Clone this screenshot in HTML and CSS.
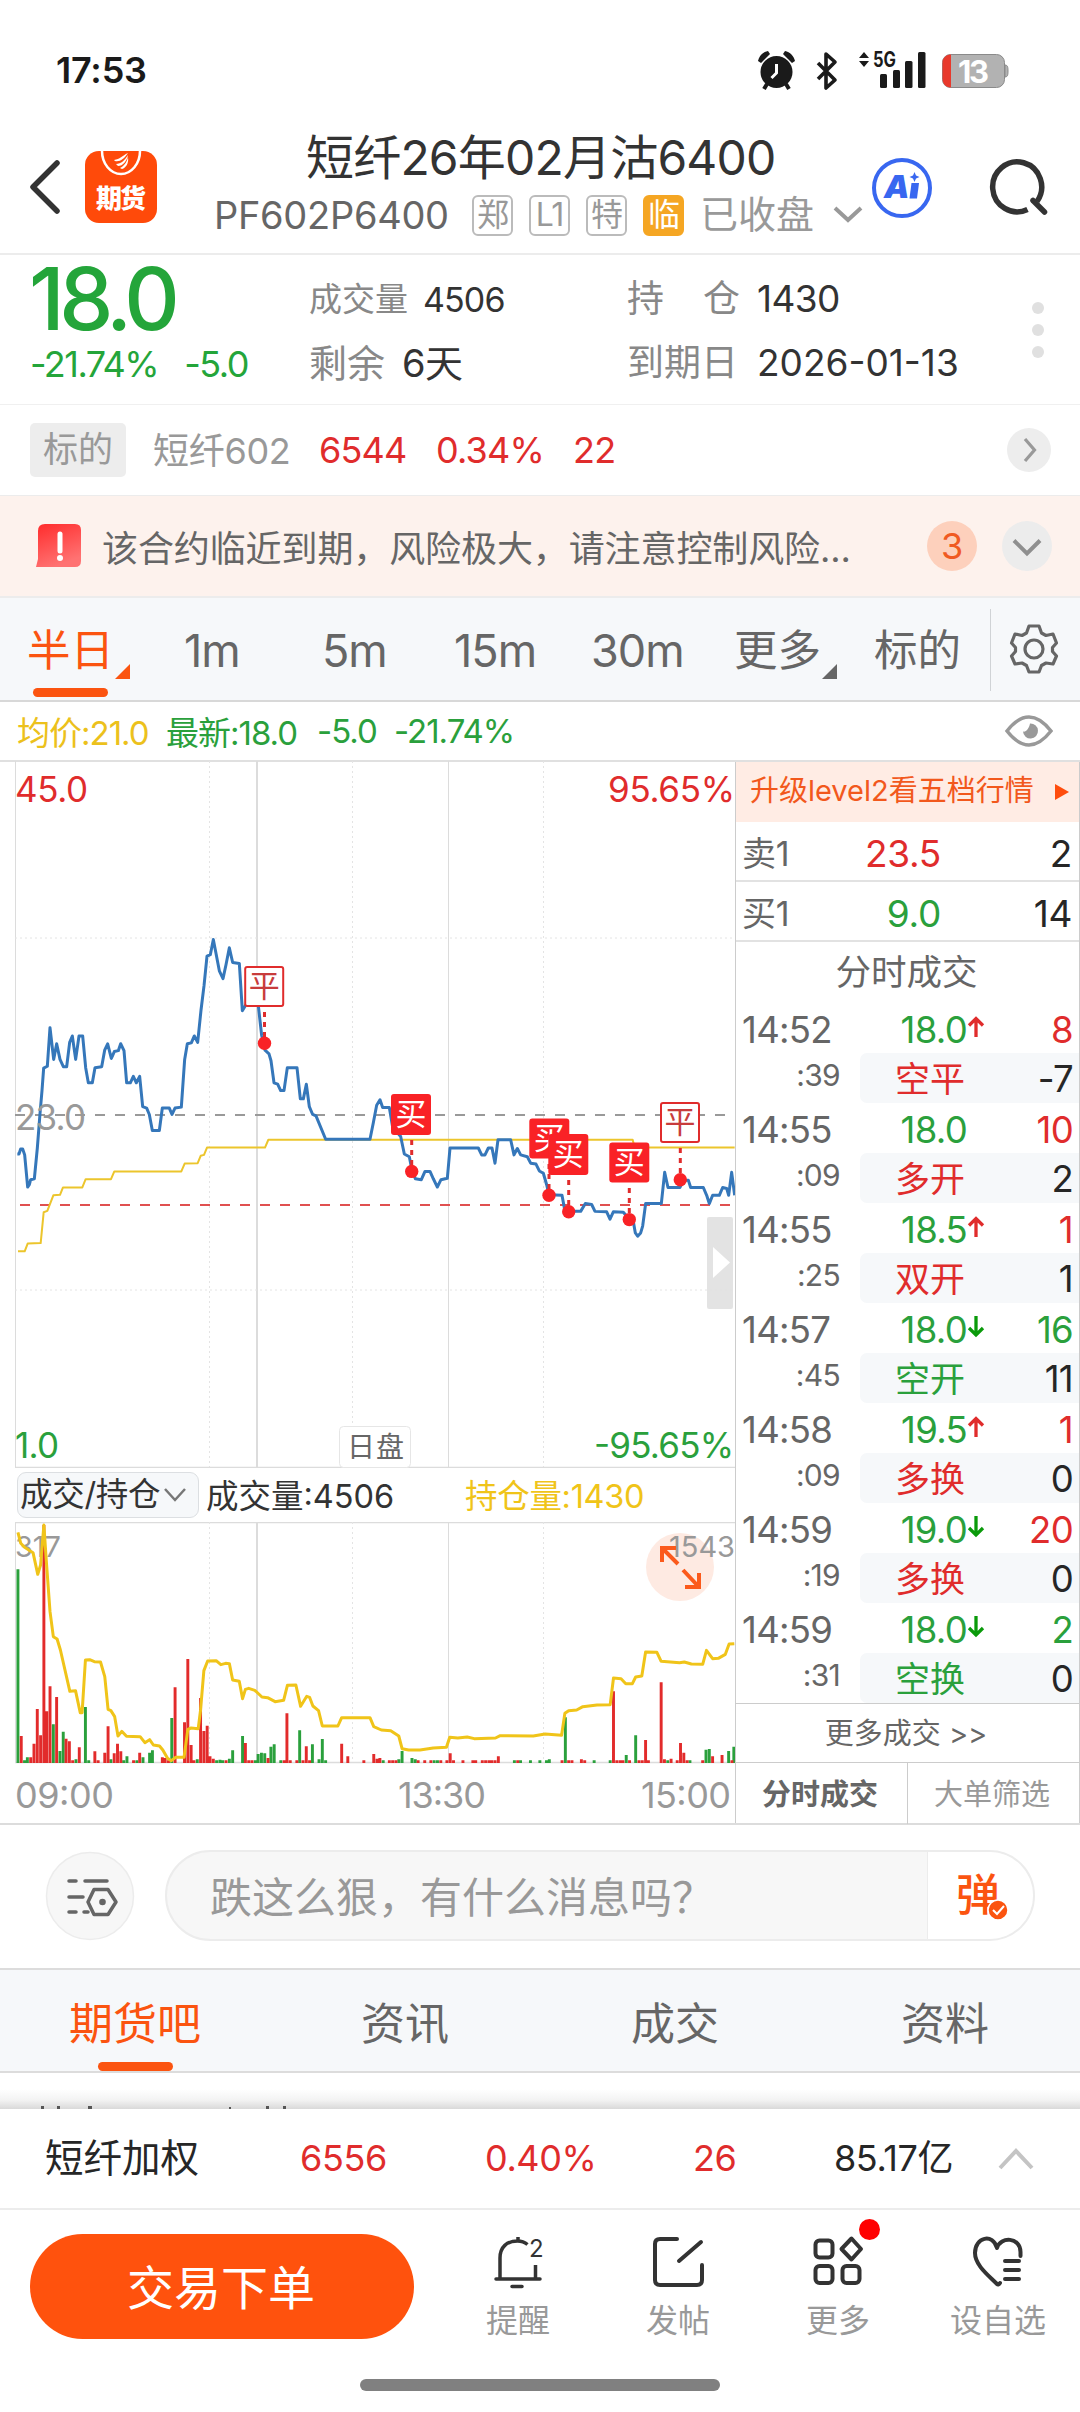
FILE: index.html
```html
<!DOCTYPE html>
<html lang="zh-CN">
<head>
<meta charset="utf-8">
<title>短纤26年02月沽6400</title>
<link rel="stylesheet" href="styles.css">
</head>
<body>
<div class="screen">
  <header class="status">
    <span class="clock">17:53</span>
    <svg class="status-icons" width="252" height="44" viewBox="0 0 252 44">
      <g fill="#1a1a1a">
        <circle cx="18.5" cy="22" r="16"/>
        <path d="M0 11C1 6 5 2 10 1l2 3L3 13zM37 11C36 6 32 2 27 1l-2 3 9 9z"/>
      </g>
      <path d="M9 34l-3 5M28 34l3 5" stroke="#1a1a1a" stroke-width="4"/>
      <path d="M18.500 14v9l-5 5" fill="none" stroke="#fff" stroke-width="3"/>
      <path d="M60 13l17 17-9 8V4l9 8-17 17" fill="none" stroke="#1a1a1a" stroke-width="3.600" stroke-linejoin="round"/>
      <path d="M106 2l5 6h-10zM106 17l5-6h-10z" fill="#1a1a1a"/>
      <text x="115" y="17" class="net" textLength="23" lengthAdjust="spacingAndGlyphs">5G</text>
      <g fill="#1a1a1a"><rect x="122" y="24" width="7" height="14" rx="1.500"/><rect x="135" y="20" width="7" height="18" rx="1.500"/><rect x="147" y="11" width="7.500" height="27" rx="1.500"/><rect x="160" y="2" width="7.500" height="36" rx="1.500"/></g>
      <rect x="184.500" y="4.500" width="62" height="33" rx="8" fill="#b2b2b2" stroke="#8a8a8a"/>
      <path d="M247 15c3 0 3 3 3 6s0 6-3 6z" fill="#b2b2b2" stroke="#8a8a8a"/>
      <path d="M193 4.500h-1a8 8 0 0 0-7.500 8v17a8 8 0 0 0 7.500 8h1z" fill="#e8392c"/>
      <text x="200" y="32.500" class="battery" textLength="31">13</text>
    </svg>
  </header>

  <div class="titlebar">
    <svg class="back" width="32" height="54" viewBox="0 0 32 54"><path d="M28 3L4 27l24 24" fill="none" stroke="#333" stroke-width="5.500" stroke-linecap="round" stroke-linejoin="round"/></svg>
    <svg class="app" width="72" height="72" viewBox="0 0 72 72">
      <rect width="72" height="72" rx="14" fill="#ff4a0a"/>
      <path d="M17 0a19 23 0 0 0 38 0" fill="none" stroke="#fff" stroke-width="2.500"/>
      <path d="M29 9c6-1 8-4 14-7-4 6-8 9-13 8zM31 13c5 0 9-4 12-9-1 6-5 11-10 11zM35 17c4-2 7-6 8-11 1 6-2 11-6 12z" fill="#fff"/>
      <text x="11" y="57" class="app-name" textLength="50">期货</text>
    </svg>
    <div class="heading">
      <h1>短纤26年02月沽6400</h1>
      <div class="subhead">
        <span class="code">PF602P6400</span>
        <i class="tag">郑</i><i class="tag">L1</i><i class="tag">特</i><i class="tag hot">临</i>
        <span class="closed">已收盘</span>
        <svg width="32" height="20" viewBox="0 0 32 20"><path d="M3 3l13 12L29 3" fill="none" stroke="#999" stroke-width="4"/></svg>
      </div>
    </div>
    <svg class="ai" width="62" height="62" viewBox="0 0 62 62">
      <circle cx="31" cy="31" r="28" fill="none" stroke="#3867f0" stroke-width="4"/>
      <text x="13" y="41" class="ai-text">A</text>
      <path d="M40.500 26h7.500l-2 15.500h-7.500z" fill="#3867f0"/>
      <path d="M43.500 15l1.500 3.500 3.500 1.500-3.500 1.500-1.500 3.500-1.500-3.500-3.500-1.500 3.500-1.500z" fill="#3867f0"/>
    </svg>
    <svg class="search" width="64" height="62" viewBox="0 0 64 62"><path d="M41.500 52.500A24.500 25 0 1 1 51 44.500" fill="none" stroke="#333" stroke-width="5.500"/><path d="M47 43.500l11.500 11.500" stroke="#333" stroke-width="5.500" stroke-linecap="round"/></svg>
  </div>

  <section class="quote">
    <div class="last"><b>18.0</b><p><span>-21.74%</span><span>-5.0</span></p></div>
    <div class="stat vol"><p><em>成交量</em>4506</p><p class="big"><em>剩余</em>6天</p></div>
    <div class="stat pos"><p><em class="wide"><span>持</span><span>仓</span></em>1430</p><p class="date"><em>到期日</em>2026-01-13</p></div>
    <div class="dots"><i></i><i></i><i></i></div>
  </section>

  <section class="underlying">
    <span class="chip">标的</span><span class="uname">短纤602</span><span>6544</span><span>0.34%</span><span>22</span>
    <svg width="46" height="46" viewBox="0 0 46 46"><circle cx="23" cy="23" r="22" fill="#ededed"/><path d="M19 12l9.500 11L19 34" fill="none" stroke="#999" stroke-width="3.200"/></svg>
  </section>

  <section class="alert">
    <svg width="46" height="44" viewBox="0 0 46 44"><defs><linearGradient id="warn" x1="0" y1="0" x2=".4" y2="1"><stop stop-color="#ff2b2b"/><stop offset="1" stop-color="#ff7272"/></linearGradient></defs><path d="M9 0h30q6 0 6 6v31q0 6-6 6H0l2-8V7q0-7 7-7z" fill="url(#warn)"/><path d="M24 10v17" stroke="#fff" stroke-width="5" stroke-linecap="round"/><circle cx="24" cy="34" r="3" fill="#fff"/></svg>
    <p>该合约临近到期，风险极大，请注意控制风险...</p>
    <b>3</b>
    <svg width="50" height="50" viewBox="0 0 50 50"><circle cx="25" cy="25" r="25" fill="#ececec"/><path d="M12 19.500l13 13 13-13" fill="none" stroke="#8f8f8f" stroke-width="4"/></svg>
  </section>

  <nav class="periods">
    <span class="on more">半日</span><span>1m</span><span>5m</span><span>15m</span><span>30m</span><span class="more">更多</span><span>标的</span>
    <svg width="90" height="82" viewBox="0 0 90 82"><path d="M.5 0v82" stroke="#d0d3d6"/><g fill="none" stroke="#666" stroke-width="3.200" stroke-linejoin="round"><circle cx="44" cy="40" r="9"/><path d="M39 17h10l2.500 7 4.500 2.500 7-1.500 3.500 9-4 4.500v4l4 4.500-3.500 8-7-1-4.500 2.500-2.500 6.500H39l-2.500-6.500-4.500-2.500-7 1-3.500-8 4-4.500v-4l-4-4.500 3.500-9 7 1.500 4.500-2.500z"/></g></svg>
  </nav>

  <div class="legend">
    <span class="avg">均价:21.0</span><span>最新:18.0</span><span>-5.0</span><span>-21.74%</span>
    <svg width="50" height="34" viewBox="0 0 50 34"><path d="M3 17Q25-11 47 17 25 45 3 17z" fill="none" stroke="#999" stroke-width="3.500"/><path d="M26 9.500a7.500 7.500 0 1 1-7 8c3 1 6-3 7-8z" fill="#999"/></svg>
  </div>

  <main class="board">
    <div class="charts">
      <svg class="price" width="735" height="708" viewBox="0 0 735 708">
        <g stroke="#dcdcdc" fill="none">
          <path d="M15.500 1v706M448.500 1v706"/><path d="M257 1v706" stroke-width="2"/>
          <path d="M15 178h720M15 530h720M209.500 1v706M352.500 1v706M543.500 1v706" stroke="#e4e4e4" stroke-dasharray="2 3"/>
        </g>
        <path d="M15 707.500h720" stroke="#dcdcdc" stroke-width="1.500"/>
        <path d="M15 355h720" stroke="#999" stroke-width="2" stroke-dasharray="10 10"/>
        <path d="M20 445h715" stroke="#e05050" stroke-width="2" stroke-dasharray="10 10"/>
        <rect x="339.500" y="666.500" width="71" height="41" rx="4" fill="#fff" stroke="#e6e6e6"/>
        <text x="347" y="697" class="session" textLength="57">日盘</text>
        <g fill="none" transform="scale(.33333 .45918)" stroke-linejoin="round">
          <polyline vector-effect="non-scaling-stroke" stroke="#ecc52c" stroke-width="2" points="54,1070 74,1070 83,1053 122,1052 131,985 142,982 160,948 180,947 189,931 247,931 257,913 333,913 343,896 544,896 554,879 593,878 602,862 612,860 621,844 795,844 805,827 1898,827 1904,844 2204,844"/>
          <polyline vector-effect="non-scaling-stroke" stroke="#3577ba" stroke-width="3" points="52,858 57,858 62,847 68,847 74,860 83,930 88,925 92,914 103,912 112,845 120,770 126,720 131,671 142,667 150,583 161,652 170,618 180,652 190,668 200,668 209,615 217,601 227,652 237,601 248,601 257,670 265,703 277,703 285,670 305,668 314,632 323,618 334,650 343,635 355,633 362,618 372,633 380,703 391,703 400,689 409,703 419,689 428,755 440,758 448,772 457,807 478,807 487,758 508,758 516,772 525,758 544,756 554,652 562,618 574,616 583,601 593,615 603,545 612,492 621,427 631,424 640,391 658,459 669,476 678,446 688,409 698,441 718,443 727,546 736,535 750,520 775,535 785,600 795,632 807,640 813,655 822,703 833,706 842,720 852,720 862,670 891,670 901,738 910,738 919,706 928,755 938,772 948,775 977,826 1110,826 1120,790 1130,752 1140,740 1148,757 1168,757 1178,800 1202,820 1213,858 1228,864 1235,890 1246,912 1264,914 1275,896 1290,896 1300,912 1312,930 1323,914 1342,911 1350,845 1435,845 1445,860 1455,860 1465,845 1476,845 1485,878 1494,827 1532,827 1542,860 1552,846 1562,860 1582,864 1592,878 1608,880 1618,895 1630,900 1640,925 1647,947 1686,948 1695,983 1742,983 1756,966 1775,968 1785,983 1820,984 1830,1000 1840,984 1870,985 1888,1000 1900,1005 1906,1030 1913,1037 1922,1030 1928,1015 1937,966 1984,966 1994,898 2004,931 2040,931 2050,915 2065,915 2072,931 2110,931 2120,948 2128,966 2138,948 2158,948 2168,931 2180,933 2186,948 2195,898 2204,948"/>
        </g>
        <g class="num">
          <text x="15" y="41.500" fill="#e02c2c" textLength="73">45.0</text>
          <text x="608" y="41.500" fill="#e02c2c" textLength="127">95.65%</text>
          <text x="15" y="370" fill="#999" textLength="71">23.0</text>
          <text x="15" y="698" fill="#2aa03c" textLength="44">1.0</text>
          <text x="594" y="698" fill="#2aa03c" textLength="140">-95.65%</text>
        </g>
        <g stroke="#e02c2c" stroke-width="3" stroke-dasharray="5 5"><path d="M264.500 252v28M411.700 380v28M549 404v28M568.700 420v28M629.300 428v28M680.300 388v28"/></g>
        <g fill="#f92226"><circle cx="264.500" cy="283.300" r="6.700"/><circle cx="411.700" cy="411.400" r="6.700"/><circle cx="549" cy="435.300" r="6.700"/><circle cx="568.700" cy="451.800" r="6.700"/><circle cx="629.300" cy="459.600" r="6.700"/><circle cx="680.300" cy="419.700" r="6.700"/></g>
        <g class="mark">
          <rect x="245.200" y="207" width="38" height="39" rx="2" class="close"/><text x="264.300" y="237" class="closed-t">平</text>
          <rect x="391" y="334" width="40" height="41" rx="3"/><text x="411" y="365">买</text>
          <rect x="529.300" y="358.500" width="40" height="40" rx="3"/><text x="549.300" y="389">买</text>
          <rect x="548.300" y="374" width="40" height="41" rx="3"/><text x="568.300" y="405">买</text>
          <rect x="609.300" y="382.500" width="40" height="40" rx="3"/><text x="629.300" y="413">买</text>
          <rect x="661" y="343" width="38" height="39" rx="2" class="close"/><text x="680" y="373" class="closed-t">平</text>
        </g>
        <rect x="707" y="457" width="26" height="92" rx="2" fill="#e0e0e0" fill-opacity=".9"/><path d="M713 487l17 15.500L713 518z" fill="#fff"/>
      </svg>

      <div class="indicator">
        <span class="select">成交/持仓<svg width="22" height="14" viewBox="0 0 22 14"><path d="M1 1l10 11L21 1" fill="none" stroke="#777" stroke-width="2.500"/></svg></span>
        <span class="iv">成交量:4506</span><span class="io">持仓量:1430</span>
      </div>

      <svg class="volume" width="735" height="302" viewBox="0 0 735 302">
        <g stroke="#dcdcdc" fill="none"><path d="M15 .500h720M15 240.500h720" stroke-width="1.500"/><path d="M15.500 0v240M448.500 0v240"/><path d="M257 0v240" stroke-width="2"/><path d="M209.500 0v240M352.500 0v240M543.500 0v240" stroke="#e4e4e4" stroke-dasharray="2 3"/></g>
        <circle cx="680" cy="45" r="34" fill="#feeae2"/>
        <g class="axis">
          <text x="15" y="35" class="small" textLength="46">317</text><text x="669" y="35" class="small" textLength="66">1543</text>
          <text x="15" y="286" textLength="99">09:00</text><text x="398" y="286" textLength="88">13:30</text><text x="641" y="286" textLength="90">15:00</text>
        </g>
        <path d="M678 42L663 27M662 40V26h14M683 48l15 16M699 51v14h-14" fill="none" stroke="#fb5a1c" stroke-width="4"/>
        <g fill="none" transform="translate(0 -62) scale(.47192 .33333)">
          <path stroke="#2aa03c" stroke-width="6.200" d="M38 909V328M52 909V901M58 909V892M113 909V793M127 909V873M134 909V815M161 909V898M181 909V741M188 909V901M235 909V898M262 909V901M269 909V889M290 909V901M303 909V892M317 909V878M323 909V871M364 909V774M418 909V898M459 909V901M466 909V899M472 909V901M486 909V896M493 909V871M514 909V828M541 909V901M547 909V882M554 909V878M561 909V880M574 909V860M581 909V853M595 909V901M635 909V811M662 909V853M676 909V898M683 909V837M690 909V901M812 909V901M845 909V898M852 909V873M873 909V894M880 909V898M920 909V901M927 909V901M1090 909V901M1103 909V901M1124 909V901M1144 909V901M1158 909V901M1164 909V898M1198 909V772M1259 909V901M1293 909V901M1327 909V885M1347 909V826M1415 909V901M1462 909V901M1496 909V869M1503 909V867M1544 909V873M1555 909V860"/>
          <path stroke="#e22b2b" stroke-width="6.200" d="M45 909V828M65 909V892M72 909V851M79 909V747M86 909V826M93 909V195M99 909V754M106 909V679M120 909V711M140 909V836M147 909V844M154 909V901M168 909V862M201 909V874M208 909V901M222 909V878M229 909V799M242 909V880M249 909V851M256 909V874M283 909V901M296 909V878M344 909V892M350 909V894M357 909V901M371 909V682M391 909V787M398 909V597M405 909V855M411 909V901M425 909V714M432 909V813M439 909V797M445 909V889M452 909V896M479 909V901M520 909V849M527 909V901M534 909V901M568 909V894M602 909V901M608 909V760M615 909V901M629 909V901M642 909V901M649 909V859M656 909V901M724 909V851M737 909V889M771 909V901M792 909V882M799 909V896M805 909V894M825 909V901M832 909V901M839 909V901M886 909V901M900 909V901M913 909V901M934 909V901M947 909V901M954 909V880M961 909V901M981 909V901M1002 909V901M1008 909V901M1022 909V901M1029 909V901M1036 909V901M1042 909V901M1049 909V901M1056 909V889M1097 909V901M1191 909V901M1205 909V901M1212 909V901M1232 909V898M1239 909V901M1300 909V694M1307 909V901M1314 909V901M1320 909V901M1334 909V901M1354 909V901M1361 909V901M1368 909V840M1374 909V901M1401 909V667M1408 909V898M1422 909V896M1435 909V901M1442 909V849M1449 909V878M1456 909V901M1489 909V901M1510 909V889M1530 909V885M1551 909V901"/>
          <polyline vector-effect="non-scaling-stroke" stroke="#f0c419" stroke-width="3" stroke-linejoin="round" points="38,217 44,250 52,262 70,278 80,343 86,315 93,195 98,300 106,455 113,530 121,537 128,570 148,694 160,692 170,758 174,758 181,600 190,599 200,605 213,606 222,650 229,748 235,752 243,770 250,828 258,814 268,829 297,830 307,848 317,839 325,855 338,858 345,870 355,895 363,902 372,892 390,892 398,808 405,804 420,806 425,750 432,632 440,603 458,602 468,614 478,610 486,611 493,660 507,664 514,716 520,688 527,685 540,691 555,711 567,713 583,725 601,721 609,676 627,675 637,739 650,709 656,712 663,738 675,752 683,798 716,798 724,773 784,773 792,800 808,810 828,812 845,828 852,866 866,870 890,870 918,864 946,862 953,832 970,834 990,831 1005,836 1050,834 1060,827 1130,828 1155,822 1190,826 1197,760 1205,752 1222,750 1235,740 1265,735 1293,734 1300,654 1316,656 1326,671 1340,671 1347,651 1360,648 1368,576 1392,577 1401,604 1440,608 1450,606 1465,612 1489,613 1497,571 1510,596 1522,595 1537,583 1545,552 1556,551"/>
        </g>
      </svg>
    </div>

    <aside class="tape">
      <div class="upgrade"><span>升级level2看五档行情</span><svg width="14" height="16" viewBox="0 0 14 16"><path d="M0 0l14 8-14 8z" fill="#ff4d0d"/></svg></div>
      <div class="level"><span>卖1</span><b class="r">23.5</b><i>2</i></div>
      <div class="level"><span>买1</span><b class="g">9.0</b><i>14</i></div>
      <h2>分时成交</h2>
      <div class="trade"><span class="t">14:52</span><b class="g">18.0</b><svg class="r"><use href="#up"/></svg><i class="r">8</i><span class="s">:39</span><div><b class="r">空平</b><i>-7</i></div></div>
      <div class="trade"><span class="t">14:55</span><b class="g">18.0</b><svg></svg><i class="r">10</i><span class="s">:09</span><div><b class="r">多开</b><i>2</i></div></div>
      <div class="trade"><span class="t">14:55</span><b class="g">18.5</b><svg class="r"><use href="#up"/></svg><i class="r">1</i><span class="s">:25</span><div><b class="r">双开</b><i>1</i></div></div>
      <div class="trade"><span class="t">14:57</span><b class="g">18.0</b><svg class="dn"><use href="#down"/></svg><i class="g">16</i><span class="s">:45</span><div><b class="g">空开</b><i>11</i></div></div>
      <div class="trade"><span class="t">14:58</span><b class="g">19.5</b><svg class="r"><use href="#up"/></svg><i class="r">1</i><span class="s">:09</span><div><b class="r">多换</b><i>0</i></div></div>
      <div class="trade"><span class="t">14:59</span><b class="g">19.0</b><svg class="dn"><use href="#down"/></svg><i class="r">20</i><span class="s">:19</span><div><b class="r">多换</b><i>0</i></div></div>
      <div class="trade"><span class="t">14:59</span><b class="g">18.0</b><svg class="dn"><use href="#down"/></svg><i class="g">2</i><span class="s">:31</span><div><b class="g">空换</b><i>0</i></div></div>
      <div class="all">更多成交 &gt;&gt;</div>
      <div class="switch"><b>分时成交</b><span>大单筛选</span></div>
    </aside>
  </main>

  <section class="comment">
    <svg width="90" height="90" viewBox="0 0 90 90"><circle cx="45" cy="45" r="43.500" fill="#f7f7f7" stroke="#ececec" stroke-width="1.500"/><g fill="none" stroke="#666" stroke-width="3.500" stroke-linecap="round"><path d="M24 30h7M40 30h22M24 46h14M24 61h7M39 61h4"/><path d="M49 38.500h14l8 12.500-8 12.500H49L43 51z" stroke-linejoin="round"/></g><circle cx="57.500" cy="51" r="3.300" fill="#666"/></svg>
    <div class="field"><span>跌这么狠，有什么消息吗？</span><div class="danmu"><b>弹</b><svg width="22" height="22" viewBox="0 0 22 22"><circle cx="11" cy="11" r="10" fill="#fb5410" stroke="#fff" stroke-width="1.500"/><path d="M6 11l4 4 7-8" fill="none" stroke="#fff" stroke-width="2"/></svg></div></div>
  </section>

  <nav class="tabs"><span class="on">期货吧</span><span>资讯</span><span>成交</span><span>资料</span></nav>
  <div class="peek"><svg width="300" height="3" viewBox="0 0 300 3"><path d="M41 0h3v3h-3zM57 0h3v3h-3zM88 0h4v3h-4zM229 1h2v2h-2zM266 0h3v3h-3zM283 0h3v3h-3z" fill="#555"/></svg></div>

  <footer>
    <div class="index"><span>短纤加权</span><span class="r">6556</span><span class="r">0.40%</span><span class="r">26</span><span>85.17亿</span><svg width="36" height="24" viewBox="0 0 36 24"><path d="M2 21L18 4l16 17" fill="none" stroke="#c4c4c4" stroke-width="4"/></svg></div>
    <div class="actions">
      <button>交易下单</button>
      <div class="act"><svg width="56" height="56" viewBox="0 0 56 56"><g fill="none" stroke="#333" stroke-width="3.500" stroke-linecap="round"><path d="M6 45h44M22 52.500h10"/><path d="M10 44V24c0-11 7-17 17.500-17 4 0 7 1 10 3.500M45.500 44V31M28 7V3" stroke-linecap="butt"/></g><text x="39" y="23" class="count">2</text></svg><span>提醒</span></div>
      <div class="act"><svg width="56" height="56" viewBox="0 0 56 56"><path d="M27 5H10Q5 5 5 10v36q0 5 5 5h37q5 0 5-5V31M51 8L29 27" fill="none" stroke="#333" stroke-width="4" stroke-linecap="round"/></svg><span>发帖</span></div>
      <div class="act"><svg width="56" height="56" viewBox="0 0 56 56"><g fill="none" stroke="#333" stroke-width="4"><rect x="5.500" y="6.500" width="17" height="17" rx="4"/><rect x="5.500" y="32" width="17" height="17" rx="4"/><rect x="32.500" y="32" width="17" height="17" rx="4"/><path d="M41.500 4.500L51 15l-9.500 10.500L31.500 15z" stroke-linejoin="round"/></g></svg><i class="dot"></i><span>更多</span></div>
      <div class="act"><svg width="56" height="56" viewBox="0 0 56 56"><path d="M50.500 22V18c0-15-20-16-23.500-4C23-1 5 3 5 19c0 12 13 22 22 31 1 1 2 .5 3-1" fill="none" stroke="#333" stroke-width="4" stroke-linecap="round" stroke-linejoin="round"/><path d="M35 27h14M35 36h14M35 45h14" stroke="#333" stroke-width="4" stroke-linecap="round"/></svg><span>设自选</span></div>
    </div>
    <div class="home"></div>
  </footer>
</div>
<svg class="defs" width="0" height="0"><defs>
  <path id="up" d="M9 21V3M2 9.500l7-7 7 7" fill="none" stroke="currentColor" stroke-width="3.300"/>
  <path id="down" d="M9 0v18M2 12l7 7 7-7" fill="none" stroke="currentColor" stroke-width="3.300"/>
</defs></svg>
</body>
</html>
```
FILE: styles.css
```css
* { box-sizing: border-box; margin: 0; padding: 0; }
body { width: 1080px; background: #fff; font-family: "Inter", "Noto Sans CJK SC", sans-serif; color: #333; }
svg { display: block; flex: none; }
i, em { font-style: normal; }
b, h1, h2 { font-weight: 400; }
span, p, b, i, h1, h2 { white-space: nowrap; }
.defs { position: absolute; }
.screen { width: 1080px; height: 2412px; overflow: hidden; display: flex; flex-direction: column; }
.screen > * { flex: none; }
.r { color: #e02c2c !important; }
.g { color: #2aa03c !important; }
.dn { color: #0a9a0a; }

.status { height: 130px; display: flex; justify-content: space-between; padding: 50px 70px 0 56px; }
.clock { font-size: 36px; font-weight: 600; line-height: 40px; color: #1a1a1a; letter-spacing: -.2px; }
.status-icons { overflow: visible; }
.status-icons text { font-weight: 700; }
.net { font-size: 21px; fill: #1a1a1a; }
.battery { font-size: 31px; fill: #fff; }

.titlebar { height: 125px; border-bottom: 2px solid #ececec; display: flex; }
.back { margin: 30px 0 0 29px; }
.app { margin: 21px 0 0 24px; }
.app-name { font-size: 26px; font-weight: 900; fill: #fff; }
.heading { margin-left: 57px; width: 657px; }
h1 { margin-left: 92px; font-size: 48px; line-height: 56px; letter-spacing: -.8px; color: #333; }
.subhead { display: flex; align-items: center; height: 44px; margin-top: 7px; }
.code { font-size: 38px; width: 258px; letter-spacing: -.3px; color: #666; }
.tag { width: 41px; height: 41px; border: 2px solid #bbb; border-radius: 6px; margin-right: 16px; font-size: 32px; line-height: 36px; text-align: center; color: #999; letter-spacing: -1px; }
.tag.hot { background: #f5a623; border-color: #f5a623; color: #fff; }
.closed { font-size: 38px; line-height: 44px; color: #999; width: 117px; padding-bottom: 3px; }
.subhead svg { margin-left: 15px; }
.ai { margin: 27px 0 0 0; }
.ai-text { font-size: 32px; font-weight: 900; font-style: italic; fill: #3867f0; }
.search { margin: 27px 0 0 53px; }

.quote { height: 150px; border-bottom: 1px solid #f0f0f0; display: flex; }
.last { width: 278px; padding: 0 0 0 29px; color: #24a53a; }
.last b { display: block; font-size: 86px; line-height: 88px; font-weight: 500; letter-spacing: -5.500px; }
.last p { font-size: 36px; line-height: 42px; display: flex; gap: 26px; letter-spacing: -1.500px; padding-left: 1px; }
.stat { font-size: 37px; padding-top: 14px; }
.stat p { height: 64px; line-height: 60px; display: flex; color: #333; letter-spacing: -.6px; }
.stat em { color: #888; margin-right: 17px; letter-spacing: 0; }
.vol { width: 319px; padding-left: 31px; }
.vol p:first-child { font-size: 34px; line-height: 61px; letter-spacing: -.9px; }
.vol p:first-child em { font-size: 33px; margin-right: 15px; }
.vol .big { font-size: 38px; }
.pos { padding-left: 30px; width: 431px; }
.pos .date { letter-spacing: 0; }
.pos .date em { margin-right: 19px; }
.wide { width: 113px; display: flex; justify-content: space-between; }
.dots { display: flex; flex-direction: column; gap: 10px; padding-top: 47px; margin-left: 4px; }
.dots i { width: 12px; height: 12px; border-radius: 50%; background: #e0e0e0; }

.underlying { height: 91px; border-bottom: 1px solid #ececec; display: grid; grid-template-columns: 123px 166px 117px 137px 433px 46px; padding-left: 30px; align-items: center; font-size: 36px; color: #e02c2c; letter-spacing: -.8px; }
.chip { width: 96px; height: 54px; background: #ededed; border-radius: 5px; color: #999; text-align: center; line-height: 53px; font-size: 35px; letter-spacing: 0; }
.uname { color: #999; padding-bottom: 4px; letter-spacing: -.3px; }

.alert { height: 102px; background: #fdf2ed; border-bottom: 2px solid #ececec; display: flex; align-items: center; padding-left: 36px; }
.alert p { font-size: 36px; color: #666; width: 825px; margin-left: 20px; letter-spacing: -.1px; }
.alert b { width: 50px; height: 50px; border-radius: 50%; background: #fdd0bc; color: #f05a22; font-size: 36px; line-height: 50px; text-align: center; margin-right: 25px; }

.periods { height: 104px; background: #f6f8fa; border-bottom: 2px solid #d8d8d8; display: grid; grid-template-columns: 157px 138px 132px 137px 143px 140px 116px 90px; padding-left: 27px; font-size: 45px; line-height: 105px; color: #666; letter-spacing: -1px; }
.periods span { position: relative; height: 102px; }
.periods .more, .periods span:nth-child(7) { font-size: 43.500px; letter-spacing: 0; }
.periods .more::after { content: ""; position: absolute; left: 88px; top: 66px; border-left: 15px solid transparent; border-bottom: 15px solid #666; }
.periods .on { color: #fb5410; }
.periods .on::after { border-bottom-color: #fb5410; }
.periods .on::before { content: ""; position: absolute; left: 6px; top: 90px; width: 75px; height: 9px; border-radius: 5px; background: #fb5410; }
.periods svg { margin-top: 11px; }

.legend { height: 60px; border-bottom: 2px solid #e0e0e0; display: grid; grid-template-columns: 149px 151px 77px 610px 50px; padding-left: 17px; align-items: center; font-size: 33px; color: #2aa03c; letter-spacing: -1px; }
.avg { color: #ecc11c; }

.board { height: 1063px; display: flex; border-bottom: 2px solid #dcdcdc; }
.charts { width: 735px; }
.price { margin-top: -2px; }
.num { font-size: 35px; }
.session { font-size: 28px; fill: #666; }
.mark rect { fill: #f92226; }
.mark text { font-size: 31px; fill: #fff; text-anchor: middle; }
.mark .close { fill: #fff; stroke: #e02c2c; stroke-width: 2; }
.mark .closed-t { fill: #c83c3c; }
.indicator { height: 54px; display: flex; align-items: center; padding-left: 17px; font-size: 32.500px; color: #333; }
.select { width: 182px; height: 46px; border: 1px solid #dcdfe2; border-radius: 9px; background: #f6f8fa; display: flex; align-items: center; gap: 4px; padding-left: 2px; line-height: 44px; letter-spacing: -.3px; }
.iv { margin-left: 7px; width: 259px; padding-bottom: 3px; }
.io { color: #f0c419; letter-spacing: -.3px; padding-bottom: 3px; }
.axis { font-size: 36px; fill: #999; }
.axis .small { font-size: 29px; }

.tape { width: 345px; border-left: 1px solid #ccc; border-right: 1px solid #ccc; color: #666; }
.upgrade { height: 60px; background: #ffece4; display: flex; align-items: center; justify-content: space-between; padding: 0 10px 0 14px; font-size: 29px; color: #f2581c; }
.upgrade span { line-height: 40px; padding-bottom: 2px; }
.level { height: 60px; border-bottom: 2px solid #e2e2e2; display: grid; grid-template-columns: 199px 131px; padding-left: 6px; font-size: 37px; line-height: 63px; letter-spacing: -.3px; }
.level > * { height: 58px; }
.level span { grid-area: 1/1; font-size: 34px; }
.level b { grid-area: 1/1; text-align: right; }
.level i, .trade i { text-align: right; color: #262626; }
.level i { grid-area: 1/2; }
.tape h2 { height: 61px; font-size: 35.500px; line-height: 62px; text-align: center; padding-right: 2px; }
.trade { height: 100px; display: grid; grid-template: 50px 50px / 98px 127px 20px 86px; padding-left: 6px; font-size: 36.500px; line-height: 54px; letter-spacing: -.7px; }
.trade > b { text-align: right; }
.trade > svg { width: 18px; height: 24px; margin-top: 13px; }
.trade .t { grid-column: 1; }
.trade .s { grid-column: 1; font-size: 30px; line-height: 45px; text-align: right; }
.trade div { grid-column: 2 / 5; margin-left: 20px; width: 219px; background: #f6f8fa; border-radius: 7px 0 0 7px; display: flex; justify-content: space-between; padding: 0 6px 0 35px; }
.trade div b { font-size: 35px; letter-spacing: 0; line-height: 53px; }
.trade div i { line-height: 53px; }
.trade div > * { height: 50px; }
.all { height: 60px; border-top: 1px solid #ccc; border-bottom: 1px solid #ccc; font-size: 29px; line-height: 60px; text-align: center; padding-right: 3px; }
.switch { height: 61px; display: grid; grid-template-columns: 172px 171px; font-size: 29px; line-height: 64px; text-align: center; color: #999; }
.switch > * { height: 61px; padding-right: 3px; }
.switch b { border-right: 1px solid #ccc; font-weight: 700; color: #666; }

.comment { height: 143px; padding: 26px 0 0 45px; display: flex; }
.field { margin-left: 30px; margin-top: -1px; width: 870px; height: 91px; border: 2px solid #ececec; border-radius: 46px; background: #f7f7f7; display: flex; justify-content: space-between; overflow: hidden; }
.field > span { font-size: 42px; line-height: 91px; padding-left: 43px; color: #999; }
.danmu { width: 106px; background: #fff; border-left: 1px solid #ececec; padding-left: 28px; display: flex; align-items: flex-end; }
.danmu b { font-size: 44px; line-height: 88px; font-weight: 500; color: #fb5410; }
.danmu svg { margin: 0 0 18px -13px; }

.tabs { height: 105px; background: #f6f8fa; border-top: 2px solid #dcdcdc; border-bottom: 2px solid #dcdcdc; display: grid; grid-template-columns: repeat(4, 270px); text-align: center; font-size: 44px; line-height: 108px; color: #666; }
.tabs span { height: 101px; }
.tabs .on { color: #fb5410; position: relative; }
.tabs .on::after { content: ""; position: absolute; left: 98px; top: 92px; width: 75px; height: 9px; border-radius: 5px; background: #fb5410; }
.peek { height: 36px; background: linear-gradient(#fff 45%, #f3f3f3 75%, #d9d9d9); display: flex; align-items: flex-end; }

footer { height: 303px; background: #fff; }
.index { height: 101px; border-bottom: 2px solid #ececec; display: grid; grid-template-columns: 255px 185px 208px 141px 164px 36px; padding-left: 45px; align-items: center; font-size: 36px; line-height: 99px; color: #262626; letter-spacing: -.4px; }
.index span:first-child { font-size: 38.500px; letter-spacing: 0; }
.actions { height: 155px; display: flex; padding: 24px 0 0 30px; }
button { width: 384px; height: 105px; border: 0; border-radius: 53px; background: #ff520d; color: #fff; font: 400 47px/102px "Noto Sans CJK SC", sans-serif; margin-right: 24px; padding: 0 2px 3px 0; }
.act { width: 160px; display: flex; flex-direction: column; align-items: center; position: relative; font-size: 32px; color: #999; }
.act span { line-height: 46px; margin-top: 8px; }
.count { font-size: 24px; fill: #333; }
.dot { position: absolute; left: 101px; top: -15px; width: 21px; height: 21px; border-radius: 50%; background: #f00; }
.home { width: 360px; height: 12px; margin: 14px auto 0; border-radius: 6px; background: #808080; }
```
